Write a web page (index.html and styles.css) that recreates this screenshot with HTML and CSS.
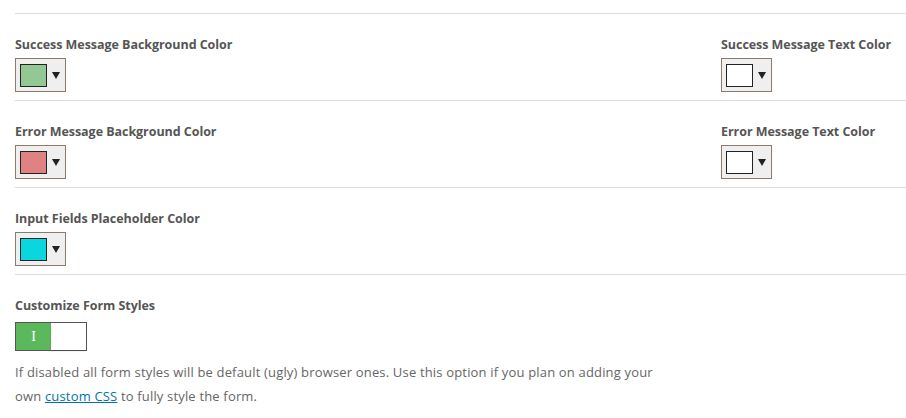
FILE: index.html
```html
<!DOCTYPE html>
<html>
<head>
<meta charset="utf-8">
<link rel="stylesheet" href="styles.css">
</head>
<body>
<div class="page">
  <div class="row two">
    <div class="field">
      <div class="label">Success Message Background Color</div>
      <div class="picker"><span class="swatch green"></span><span class="arrow"></span></div>
    </div>
    <div class="field">
      <div class="label">Success Message Text Color</div>
      <div class="picker"><span class="swatch white"></span><span class="arrow"></span></div>
    </div>
  </div>
  <div class="row two">
    <div class="field">
      <div class="label">Error Message Background Color</div>
      <div class="picker"><span class="swatch red"></span><span class="arrow"></span></div>
    </div>
    <div class="field">
      <div class="label">Error Message Text Color</div>
      <div class="picker"><span class="swatch white"></span><span class="arrow"></span></div>
    </div>
  </div>
  <div class="row">
    <div class="field">
      <div class="label">Input Fields Placeholder Color</div>
      <div class="picker"><span class="swatch cyan"></span><span class="arrow"></span></div>
    </div>
  </div>
  <div class="row last">
    <div class="field">
      <div class="label">Customize Form Styles</div>
      <div class="toggle"><span class="on">I</span><span class="off"></span></div>
      <p class="desc">If disabled all form styles will be default (ugly) browser ones. Use this option if you plan on adding your own <a href="#">custom CSS</a> to fully style the form.</p>
    </div>
  </div>
</div>
</body>
</html>
```
FILE: styles.css
```css
html, body {
  margin: 0;
  padding: 0;
  background: #fff;
}
body {
  font-family: "Open Sans", "Noto Sans", sans-serif;
  color: #555;
}
.page {
  padding-top: 13px;
  padding-left: 15px;
}
.row {
  border-top: 1px solid #dcdcdc;
  padding: 22px 0 8px 0;
}
.row.two {
  display: grid;
  grid-template-columns: 706px 1fr;
}
.row.last {
  padding-bottom: 0;
}
.label {
  font-size: 12.5px;
  font-weight: 700;
  line-height: 18px;
  height: 18px;
  color: #555;
  letter-spacing: -0.05px;
}
.picker {
  margin-top: 4px;
  width: 49px;
  height: 32px;
  border: 1px solid #8c7b6a;
  background: #efefef;
  display: flex;
  align-items: center;
  box-sizing: content-box;
}
.swatch {
  width: 25px;
  height: 21px;
  border: 1px solid #222;
  margin-left: 4px;
}
.swatch.green { background: #93c794; }
.swatch.red { background: #e08282; }
.swatch.cyan { background: #0ad6de; }
.swatch.white { background: #fff; }
.arrow {
  width: 0;
  height: 0;
  margin-left: 5px;
  border-left: 4px solid transparent;
  border-right: 4px solid transparent;
  border-top: 7px solid #222;
}
.toggle {
  margin-top: 7px;
  width: 70px;
  height: 27px;
  border: 1px solid #555;
  display: flex;
}
.toggle .on {
  width: 35px;
  background: #5cb85c;
  color: #fff;
  font-family: "Liberation Serif", serif;
  font-size: 14px;
  line-height: 27px;
  text-align: center;
}
.toggle .off {
  flex: 1;
  background: #fff;
  box-shadow: 0 1px 2px rgba(0,0,0,0.15);
}
.desc {
  margin: 9px 0 0 0;
  width: 662px;
  font-size: 13px;
  line-height: 24px;
  color: #666;
  letter-spacing: 0.17px;
}
.desc a {
  color: #0073aa;
  text-decoration: underline;
}
```
